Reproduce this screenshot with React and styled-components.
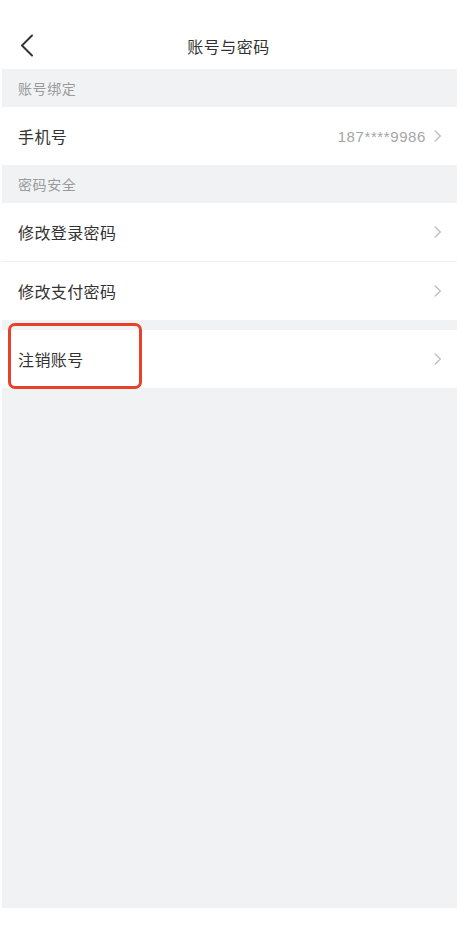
import React from "react";
import styled, { createGlobalStyle } from "styled-components";

const Global = createGlobalStyle`
  html, body { margin: 0; padding: 0; background: #ffffff; }
  body { font-family: "Noto Sans CJK SC", "Noto Sans", sans-serif; }
  * { box-sizing: border-box; }
`;

const Page = styled.div`
  width: 457px;
  height: 929px;
  display: flex;
  flex-direction: column;
  background: #ffffff;
`;

const NavBar = styled.header`
  height: 69px;
  display: grid;
  grid-template-columns: 60px 1fr 60px;
  align-items: center;
  padding-top: 22px;
`;

const BackButton = styled.button`
  border: 0;
  background: transparent;
  padding: 0 0 0 20px;
  height: 28px;
  display: flex;
  align-items: center;
  cursor: pointer;
`;

const Title = styled.h1`
  margin: 0;
  text-align: center;
  font-size: 16px;
  font-weight: 400;
  letter-spacing: 0.5px;
  color: #333333;
`;

const Content = styled.main`
  margin-left: 2px;
  height: 839px;
  background: #f1f2f4;
  display: flex;
  flex-direction: column;
  position: relative;
`;

const SectionTitle = styled.div`
  height: 38px;
  display: flex;
  align-items: center;
  padding-left: 16px;
  font-size: 14px;
  letter-spacing: 0.6px;
  color: #9a9a9a;
`;

const Gap = styled.div`
  height: ${(p) => p.$h}px;
`;

const Row = styled.div`
  position: relative;
  height: ${(p) => (p.$divider ? 59 : 58)}px;
  background: #ffffff;
  display: flex;
  align-items: center;
  justify-content: space-between;
  padding: 0 15px 0 16px;
  border-bottom: ${(p) => (p.$divider ? "1px solid #f0f0f2" : "0")};
`;

const Label = styled.span`
  font-size: 16px;
  letter-spacing: 0.4px;
  color: #333333;
`;

const Right = styled.span`
  display: flex;
  align-items: center;
  gap: 8px;
`;

const Value = styled.span`
  font-family: "Liberation Sans", "Noto Sans", sans-serif;
  font-size: 15px;
  color: #a6a6a6;
  letter-spacing: 0.6px;
`;

const Highlight = styled.div`
  position: absolute;
  left: 6px;
  top: -7px;
  width: 134px;
  height: 66px;
  border: 3px solid #e8402a;
  border-radius: 7px;
  pointer-events: none;
`;

const Chevron = () => (
  <svg width="8" height="12" viewBox="0 0 8 12" fill="none">
    <path d="M1.2 1 L6.4 6 L1.2 11" stroke="#bdbdbd" strokeWidth="1.3" strokeLinecap="round" strokeLinejoin="round" />
  </svg>
);

const BackIcon = () => (
  <svg width="14" height="24" viewBox="0 0 14 24" fill="none">
    <path d="M12 1.5 L2 11.5 L12 21.5" stroke="#333333" strokeWidth="2" strokeLinecap="round" strokeLinejoin="round" />
  </svg>
);

export default function App() {
  return (
    <>
      <Global />
      <Page>
        <NavBar>
          <BackButton aria-label="返回">
            <BackIcon />
          </BackButton>
          <Title>账号与密码</Title>
          <span />
        </NavBar>
        <Content>
          <SectionTitle>账号绑定</SectionTitle>
          <Row>
            <Label>手机号</Label>
            <Right>
              <Value>187****9986</Value>
              <Chevron />
            </Right>
          </Row>
          <SectionTitle>密码安全</SectionTitle>
          <Row $divider>
            <Label>修改登录密码</Label>
            <Chevron />
          </Row>
          <Row>
            <Label>修改支付密码</Label>
            <Chevron />
          </Row>
          <Gap $h={10} />
          <Row>
            <Label>注销账号</Label>
            <Chevron />
            <Highlight />
          </Row>
        </Content>
      </Page>
    </>
  );
}
